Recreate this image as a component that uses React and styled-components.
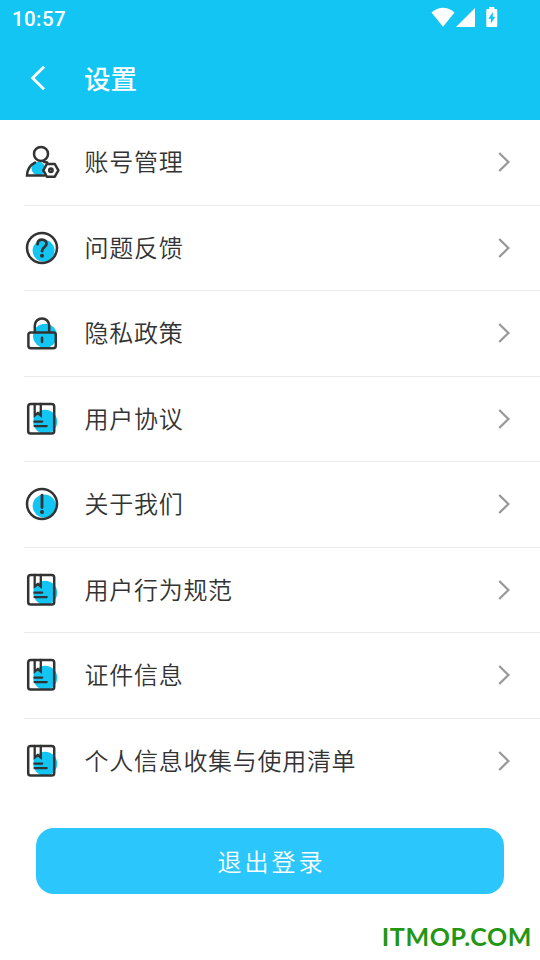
import styled, { createGlobalStyle } from 'styled-components';

const MENU = [
  { label: '账号管理', icon: AccountIcon },
  { label: '问题反馈', icon: QuestionIcon },
  { label: '隐私政策', icon: LockIcon },
  { label: '用户协议', icon: BookIcon },
  { label: '关于我们', icon: AboutIcon },
  { label: '用户行为规范', icon: BookIcon },
  { label: '证件信息', icon: BookIcon },
  { label: '个人信息收集与使用清单', icon: BookIcon },
];

function AccountIcon() {
  return (
    <IconSvg viewBox="0 0 36 36">
      <ellipse className="fill" cx="14.5" cy="24.5" rx="7" ry="6.8" />
      <circle cx="17" cy="9.9" r="7" />
      <path d="M11 18.6C6.2 21 3.2 25.5 3 31.4h17.5M23.3 18.4l-3.6-.6" />
      <path
        className="paper"
        d="M22.8 20h8l3.6 6.3-3.6 6.4h-8l-3.5-6.4z"
        strokeLinejoin="round"
      />
      <circle cx="26.9" cy="26.3" r="1.7" />
    </IconSvg>
  );
}

function QuestionIcon() {
  return (
    <IconSvg viewBox="0 0 36 36">
      <circle className="fill" cx="19.6" cy="20.8" r="11" />
      <circle cx="18" cy="18" r="15" />
      <path d="M13.6 14.2c0-2.8 1.9-4.5 4.5-4.5s4.4 1.7 4.4 4.1c0 3.4-4.4 3.5-4.4 6.8v.6" strokeWidth="2.8" />
      <circle className="dot" cx="18" cy="25.7" r="2" />
    </IconSvg>
  );
}

function LockIcon() {
  return (
    <IconSvg viewBox="0 0 36 36">
      <circle className="fill" cx="21" cy="20.8" r="12" />
      <rect x="4.4" y="17.4" width="27.4" height="15.8" rx="2.4" />
      <path d="M10.8 17V10.6a7.2 7.2 0 0 1 14.4 0V17M18 22.7v4.4" />
    </IconSvg>
  );
}

function BookIcon() {
  return (
    <IconSvg viewBox="0 0 36 36">
      <circle className="fill" cx="21.2" cy="20.8" r="12" />
      <rect x="4.2" y="3" width="26" height="29.6" rx="2.6" />
      <path d="M10.7 3v11.5l3.1-2.5 3 2.5V3M10.5 20.6h7.7M10.5 25.1h12.2" strokeWidth="2.3" />
    </IconSvg>
  );
}

function AboutIcon() {
  return (
    <IconSvg viewBox="0 0 36 36">
      <circle className="fill" cx="20.3" cy="20" r="11.6" />
      <circle cx="18" cy="18" r="15" />
      <path d="M18 9.2v12.3" strokeWidth="2.8" />
      <circle className="dot" cx="18" cy="25.9" r="2" />
    </IconSvg>
  );
}

function StatusIcons() {
  return (
    <StatusSvg viewBox="0 0 68 20">
      <path d="M.5 5.6C7.2-.8 16.8-.8 23.5 5.6L12 19.8z" />
      <path d="M25 20L44 1v19z" />
      <path
        fillRule="evenodd"
        d="M58.3 0h5v2h1.7c.8 0 1.3.5 1.3 1.3v15.4c0 .8-.5 1.3-1.3 1.3h-8.4c-.8 0-1.3-.5-1.3-1.3V3.3c0-.8.5-1.3 1.3-1.3h1.7zM61.8 5L57.3 11.8h2.6v4.8L64.3 9.8h-2.5z"
      />
    </StatusSvg>
  );
}

function App() {
  return (
    <Screen>
      <GlobalStyle />
      <Header>
        <StatusBar>
          <time>10:57</time>
          <StatusIcons />
        </StatusBar>
        <TitleBar>
          <BackButton aria-label="返回">
            <svg width="16" height="26" viewBox="0 0 16 26">
              <path d="M14 1.8L2.6 13 14 24.2" />
            </svg>
          </BackButton>
          <Title>设置</Title>
        </TitleBar>
      </Header>

      <MenuList>
        {MENU.map(({ label, icon: Icon }) => (
          <MenuItem key={label}>
            <Icon />
            <MenuLabel>{label}</MenuLabel>
            <Chevron viewBox="0 0 12 22">
              <path d="M1.2 2L10.4 11 1.2 20" />
            </Chevron>
          </MenuItem>
        ))}
      </MenuList>

      <LogoutButton>退出登录</LogoutButton>
      <SiteMark>ITMOP.COM</SiteMark>
    </Screen>
  );
}

export default App;

const GlobalStyle = createGlobalStyle`
  * {
    box-sizing: border-box;
  }

  body {
    margin: 0;
    background: #fff;
    font-family: 'Noto Sans CJK SC', sans-serif;
  }
`;

const Screen = styled.div`
  width: 540px;
  height: 960px;
  display: flex;
  flex-direction: column;
  overflow: hidden;
`;

const Header = styled.header`
  height: 120px;
  flex: none;
  color: #fff;
  background: #12c5f3;
`;

const StatusBar = styled.div`
  height: 36px;
  padding: 0 41px 0 12px;
  display: flex;
  justify-content: space-between;

  time {
    font: 500 20.5px/38px Roboto, sans-serif;
    letter-spacing: 0.4px;
  }
`;

const StatusSvg = styled.svg`
  width: 68px;
  height: 20px;
  margin-top: 7px;
  fill: #fff;
`;

const TitleBar = styled.div`
  height: 84px;
  padding-left: 30px;
  display: flex;
  align-items: center;
`;

const BackButton = styled.button`
  width: 54px;
  height: 48px;
  padding: 0;
  display: flex;
  align-items: center;
  border: none;
  background: none;

  path {
    fill: none;
    stroke: #fff;
    stroke-width: 2.8;
  }
`;

const Title = styled.h1`
  margin: 0;
  font-size: 26.5px;
  font-weight: 500;
  line-height: 40px;
`;

const MenuList = styled.ul`
  margin: 0;
  padding: 0 0 0 24px;
  list-style: none;
`;

const MenuItem = styled.li`
  height: 85.5px;
  padding: 0 30px 0.5px 0;
  display: flex;
  align-items: center;
  border-bottom: 1px solid #e9e9e9;

  &:last-child {
    border-bottom: none;
  }
`;

const IconSvg = styled.svg`
  width: 36px;
  height: 36px;
  flex: none;
  fill: none;
  stroke: #333;
  stroke-width: 2.5;
  stroke-linecap: round;

  .fill {
    fill: #12c5f3;
    stroke: none;
  }

  .paper {
    fill: #fff;
  }

  .dot {
    fill: #333;
    stroke: none;
  }
`;

const MenuLabel = styled.span`
  flex: 1;
  margin-left: 24.6px;
  padding-bottom: 2px;
  color: #333;
  font-size: 24px;
  font-weight: 350;
  line-height: 36px;
  letter-spacing: 0.7px;
`;

const Chevron = styled.svg`
  width: 12px;
  height: 22px;
  fill: none;
  stroke: #999;
  stroke-width: 2.3;
`;

const LogoutButton = styled.button`
  height: 66px;
  flex: none;
  margin: 24px 36px 0;
  padding: 0 0 1px 3px;
  border: none;
  border-radius: 18px;
  color: #fff;
  background: #2bc7fc;
  font-family: inherit;
  font-size: 24px;
  font-weight: 350;
  letter-spacing: 3px;
`;

const SiteMark = styled.footer`
  margin: 25px 8px 0 0;
  color: #239712;
  font: 700 25px/34px Lato, sans-serif;
  letter-spacing: 0.6px;
  text-align: right;
`;
